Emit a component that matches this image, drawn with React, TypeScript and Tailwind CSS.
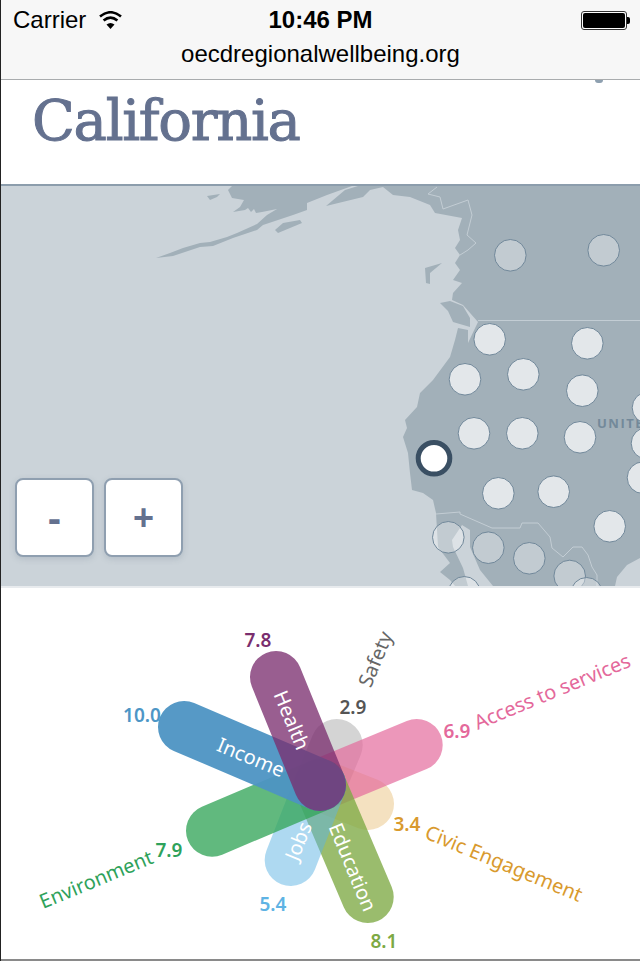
const LAND =
  "M232 186 L228 190 L232 198 L244 200 L240 207 L233 212 L245 210 L248 208 L251 212 L254 209 L256 213 L262 212 L277 209 L267 215 L257 224 L237 233 L227 237 L210 242 L200 243 L183 248 L170 253 L156 258 L173 256 L200 247 L213 246 L233 238 L257 230 L263 225 L293 215 L307 210 L307 203 L327 195 L352 186 L358 186 L345 190 L326 206 L363 197 L370 190 L383 187 L393 195 L410 197 L430 205 L435 213 L462 218 L458 230 L460 240 L455 248 L460 255 L455 263 L460 270 L453 280 L462 283 L453 293 L452 300 L463 305 L478 322 L468 343 L468 330 L458 328 L455 340 L450 357 L433 380 L420 393 L417 407 L405 420 L407 428 L403 437 L408 453 L410 473 L412 490 L423 493 L433 500 L436 513 L438 547 L450 563 L440 572 L450 580 L455 586 L615 586 L617 577 L627 565 L640 558 L640 186 Z";

const ISLANDS = [
  "M207 196 L220 194 L217 197 L210 200 Z",
  "M275 230 L283 223 L300 220 L302 223 L278 233 Z",
  "M425 268 L442 263 L430 273 L430 284 L426 283 Z",
  "M440 303 L450 301 L463 306 L470 318 L470 327 L453 322 L448 311 Z",
];

const GULF = "M462 525 L470 530 L470 547 L480 570 L493 586 L468 586 L463 568 L453 547 L452 540 Z";

const BORDERS = [
  "M437 187 L428 194 L440 197 L443 209 L468 200 L472 215 L467 235 L476 243 L468 250 L460 255",
  "M478 320.5 L640 320.5",
  "M436 514 L460 512 L460 514 L492 528 L520 528 L522 523 L538 523 L550 537 L552 548 L563 557 L573 547 L582 547 L588 555 L592 567 L597 575 L597 586",
];

const REGIONS = [
  [489.7, 339.3],
  [587.3, 343.3],
  [465, 379.3],
  [523.3, 374.3],
  [582.3, 390.7],
  [474, 433.3],
  [522.3, 433.3],
  [580, 437.3],
  [498.3, 493.3],
  [553.7, 491.7],
  [609.7, 526.3],
  [648, 407.7],
  [647, 443.3],
  [643, 477.7],
];

const OTHER_REGIONS = [
  [510.3, 255.3],
  [603.7, 250.3],
  [488.3, 547.7],
  [529.3, 558.3],
  [569.7, 576],
  [586.7, 593.3],
  [464.3, 592.3],
  [448.3, 537.3],
];

// drawn in this order, last one on top
const PETALS = [
  { x: 336.7, y: 745, color: "#555555", opacity: 0.25 },
  { x: 368, y: 804, color: "#d99a2e", opacity: 0.3 },
  { x: 416.7, y: 745, color: "#e4699b", opacity: 0.69 },
  { x: 367.7, y: 897, color: "#7da944", opacity: 0.78 },
  { x: 290.7, y: 860, color: "#5eb3e4", opacity: 0.5 },
  { x: 212, y: 830.7, color: "#37a65b", opacity: 0.79 },
  { x: 184, y: 727, color: "#4d94c3", opacity: 0.95 },
  { x: 276, y: 677, color: "#7a2e6e", opacity: 0.77 },
];

const PETAL_LABELS = [
  { text: "Income", x: 251, y: 757, angle: 22.5 },
  { text: "Health", x: 292, y: 720, angle: 67.5 },
  { text: "Jobs", x: 298, y: 841, angle: -67.5 },
  { text: "Education", x: 353, y: 867, angle: 67.5 },
];

const SCORES = [
  { text: "7.8", x: 258, y: 640, color: "#7a2e6e" },
  { text: "2.9", x: 353, y: 707, color: "#555555" },
  { text: "6.9", x: 457, y: 731, color: "#e4699b" },
  { text: "3.4", x: 407, y: 824, color: "#d99a2e" },
  { text: "8.1", x: 384, y: 941, color: "#7da944" },
  { text: "5.4", x: 273, y: 904, color: "#5eb3e4" },
  { text: "7.9", x: 169, y: 850, color: "#2ea25b" },
  { text: "10.0", x: 142, y: 715, color: "#4d96c6" },
];

const OUTER_LABELS = [
  { text: "Safety", x: 375, y: 659, angle: -67.5, color: "#666666" },
  { text: "Access to services", x: 552, y: 691, angle: -22.5, color: "#e4699b" },
  { text: "Civic Engagement", x: 504, y: 863, angle: 22.5, color: "#d99a2e" },
  { text: "Environment", x: 96, y: 879, angle: -22.5, color: "#2ea25b" },
];

const StatusBar = () => (
  <div className="h-[80px] bg-[#f7f7f7] border-b border-[#a9acae] text-black [font-family:'Liberation_Sans',sans-serif] text-[24px] leading-[28px]">
    <div className="relative flex items-center h-[40px] pl-[12px]">
      <span>Carrier</span>
      <svg className="ml-[13px] mt-[-1px]" width="23" height="18" viewBox="0 0 23 18">
        <path d="M1 5.5 Q11.5 -3 22 5.5" fill="none" stroke="#000" strokeWidth="2.6" />
        <path d="M4.6 9.6 Q11.5 3.6 18.4 9.6" fill="none" stroke="#000" strokeWidth="2.6" />
        <path d="M11.5 18 L7.5 13.5 Q11.5 10.5 15.5 13.5 Z" fill="#000" />
      </svg>
      <span className="absolute left-0 right-0 text-center font-bold">10:46 PM</span>
      <div className="ml-auto mr-[10px] flex items-center">
        <div className="w-[46px] h-[19px] rounded-[3px] border border-[#333] p-[1px] bg-white">
          <div className="w-full h-full rounded-[2px] bg-black" />
        </div>
        <div className="w-[3px] h-[7px] rounded-r-[2px] bg-black" />
      </div>
    </div>
    <div className="text-center">oecdregionalwellbeing.org</div>
  </div>
);

const MapPanel = () => (
  <div className="relative h-[402px] border-t-2 border-[#8c9dac] bg-[#cbd3d9]">
    <svg className="block w-full h-full" viewBox="1 186 639 400">
      <path d={LAND} fill="#a2b0b9" />
      {ISLANDS.map((d) => (
        <path key={d} d={d} fill="#a2b0b9" />
      ))}
      <path d={GULF} fill="#cbd3d9" />
      {BORDERS.map((d) => (
        <path key={d} d={d} fill="none" stroke="#c3cdd4" strokeWidth="1" />
      ))}
      <text x="597" y="428" fill="#73899a" fontSize="13" fontWeight="700" letterSpacing="1.5" className="[font-family:'Open_Sans',sans-serif]">
        UNITED STATES
      </text>
      {OTHER_REGIONS.map(([cx, cy]) => (
        <circle key={cx} cx={cx} cy={cy} r="15.8" fill="#ffffff" fillOpacity="0.35" stroke="#71889a" strokeWidth="1" />
      ))}
      {REGIONS.map(([cx, cy]) => (
        <circle key={cx} cx={cx} cy={cy} r="15.8" fill="#e3e7ea" stroke="#71889a" strokeWidth="1" />
      ))}
      <circle cx="434" cy="458.3" r="15.8" fill="#ffffff" stroke="#3a4f63" strokeWidth="5" />
    </svg>
    <div className="absolute left-[14px] top-[292px] flex gap-[10px] [font-family:'Liberation_Sans',sans-serif] text-[#64718f] font-bold">
      <button className="w-[79px] h-[79px] rounded-[8px] border-2 border-[#8f9fb0] bg-white text-[40px] leading-[66px] shadow-[0_2px_6px_rgba(80,100,120,0.2)]">
        -
      </button>
      <button className="w-[79px] h-[79px] rounded-[8px] border-2 border-[#8f9fb0] bg-white text-[36px] leading-[74px] shadow-[0_2px_6px_rgba(80,100,120,0.2)]">
        +
      </button>
    </div>
  </div>
);

const Flower = () => (
  <svg className="block w-full h-[371px] [font-family:'Noto_Sans',sans-serif]" viewBox="1 588 639 371">
    {PETALS.map((p) => (
      <line
        key={p.color}
        x1="320"
        y1="785"
        x2={p.x}
        y2={p.y}
        stroke={p.color}
        strokeOpacity={p.opacity}
        strokeWidth="52"
        strokeLinecap="round"
      />
    ))}
    {PETAL_LABELS.map((l) => (
      <text
        key={l.text}
        x={l.x}
        y={l.y}
        fill="#ffffff"
        fontSize="20"
        textAnchor="middle"
        dominantBaseline="central"
        transform={`rotate(${l.angle} ${l.x} ${l.y})`}
      >
        {l.text}
      </text>
    ))}
    {OUTER_LABELS.map((l) => (
      <text
        key={l.text}
        x={l.x}
        y={l.y}
        fill={l.color}
        fontSize="20"
        textAnchor="middle"
        dominantBaseline="central"
        transform={`rotate(${l.angle} ${l.x} ${l.y})`}
      >
        {l.text}
      </text>
    ))}
    {SCORES.map((s) => (
      <text
        key={s.text}
        x={s.x}
        y={s.y}
        fill={s.color}
        fontSize="19"
        fontWeight="600"
        textAnchor="middle"
        dominantBaseline="central"
      >
        {s.text}
      </text>
    ))}
  </svg>
);

const App = () => {
  return (
    <div className="relative w-[640px] h-[961px] overflow-hidden bg-white border-l border-[#222]">
      <StatusBar />
      <div className="relative h-[104px]">
        {/* bit of the map marker that pokes out under the url bar */}
        <div className="absolute left-[594px] top-0 w-[8px] h-[3px] rounded-b-[4px] bg-[#8ea0b0]" />
        <h1 className="pl-[31px] pt-[9px] text-[56px] leading-[64px] tracking-[-1.3px] text-[#64718f] [font-family:'DejaVu_Serif',serif] [-webkit-text-stroke:1px_#64718f]">
          California
        </h1>
      </div>
      <MapPanel />
      <div className="h-[2px] bg-[#e8ebee]" />
      <Flower />
      <div className="h-[2px] bg-[#8a8a8a]" />
    </div>
  );
};

export default App;
